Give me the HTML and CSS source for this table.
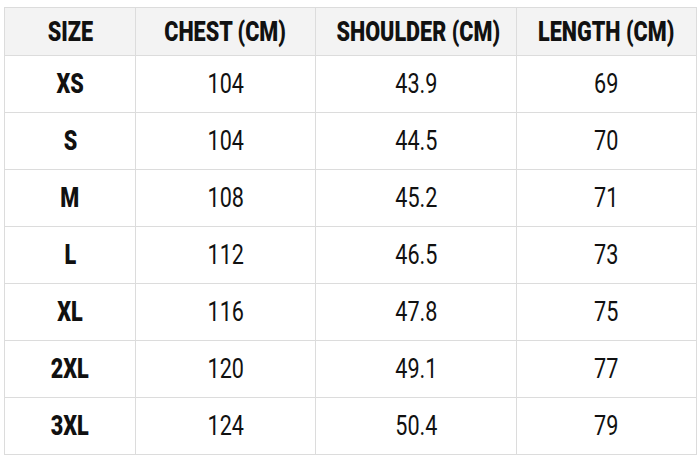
FILE: index.html
```html
<!DOCTYPE html>
<html>
<head>
<meta charset="utf-8">
<link rel="stylesheet" href="styles.css">
</head>
<body>
<table class="sizes">
  <colgroup>
    <col class="c1"><col class="c2"><col class="c3"><col class="c4">
  </colgroup>
  <thead>
    <tr><th><span>SIZE</span></th><th><span>CHEST (CM)</span></th><th><span>SHOULDER (CM)</span></th><th><span>LENGTH (CM)</span></th></tr>
  </thead>
  <tbody>
    <tr><td class="sz"><span>XS</span></td><td><span>104</span></td><td><span>43.9</span></td><td><span>69</span></td></tr>
    <tr><td class="sz"><span>S</span></td><td><span>104</span></td><td><span>44.5</span></td><td><span>70</span></td></tr>
    <tr><td class="sz"><span>M</span></td><td><span>108</span></td><td><span>45.2</span></td><td><span>71</span></td></tr>
    <tr><td class="sz"><span>L</span></td><td><span>112</span></td><td><span>46.5</span></td><td><span>73</span></td></tr>
    <tr><td class="sz"><span>XL</span></td><td><span>116</span></td><td><span>47.8</span></td><td><span>75</span></td></tr>
    <tr><td class="sz"><span>2XL</span></td><td><span>120</span></td><td><span>49.1</span></td><td><span>77</span></td></tr>
    <tr><td class="sz"><span>3XL</span></td><td><span>124</span></td><td><span>50.4</span></td><td><span>79</span></td></tr>
  </tbody>
</table>
</body>
</html>
```
FILE: styles.css
```css
html, body {
  margin: 0;
  background: #ffffff;
}
body {
  padding: 7px 0 0 4px;
  font-family: Roboto, "Liberation Sans", sans-serif;
  color: #111111;
}
.sizes {
  border-collapse: collapse;
  table-layout: fixed;
  width: 692px;
}
.c1 { width: 131px; }
.c2 { width: 180px; }
.c3 { width: 201px; }
.c4 { width: 180px; }
.sizes th, .sizes td {
  border: 1.5px solid #dcdcdc;
  text-align: center;
  padding: 0;
  white-space: nowrap;
}
.sizes th {
  height: 47px;
  background: #f3f3f3;
  font-weight: 900;
  font-size: 27px;
}
.sizes td {
  height: 56px;
  font-size: 27px;
  font-weight: 400;
}
.sizes td.sz {
  font-weight: 900;
}
.sizes span {
  display: inline-block;
  transform: scaleX(0.8);
}
```
